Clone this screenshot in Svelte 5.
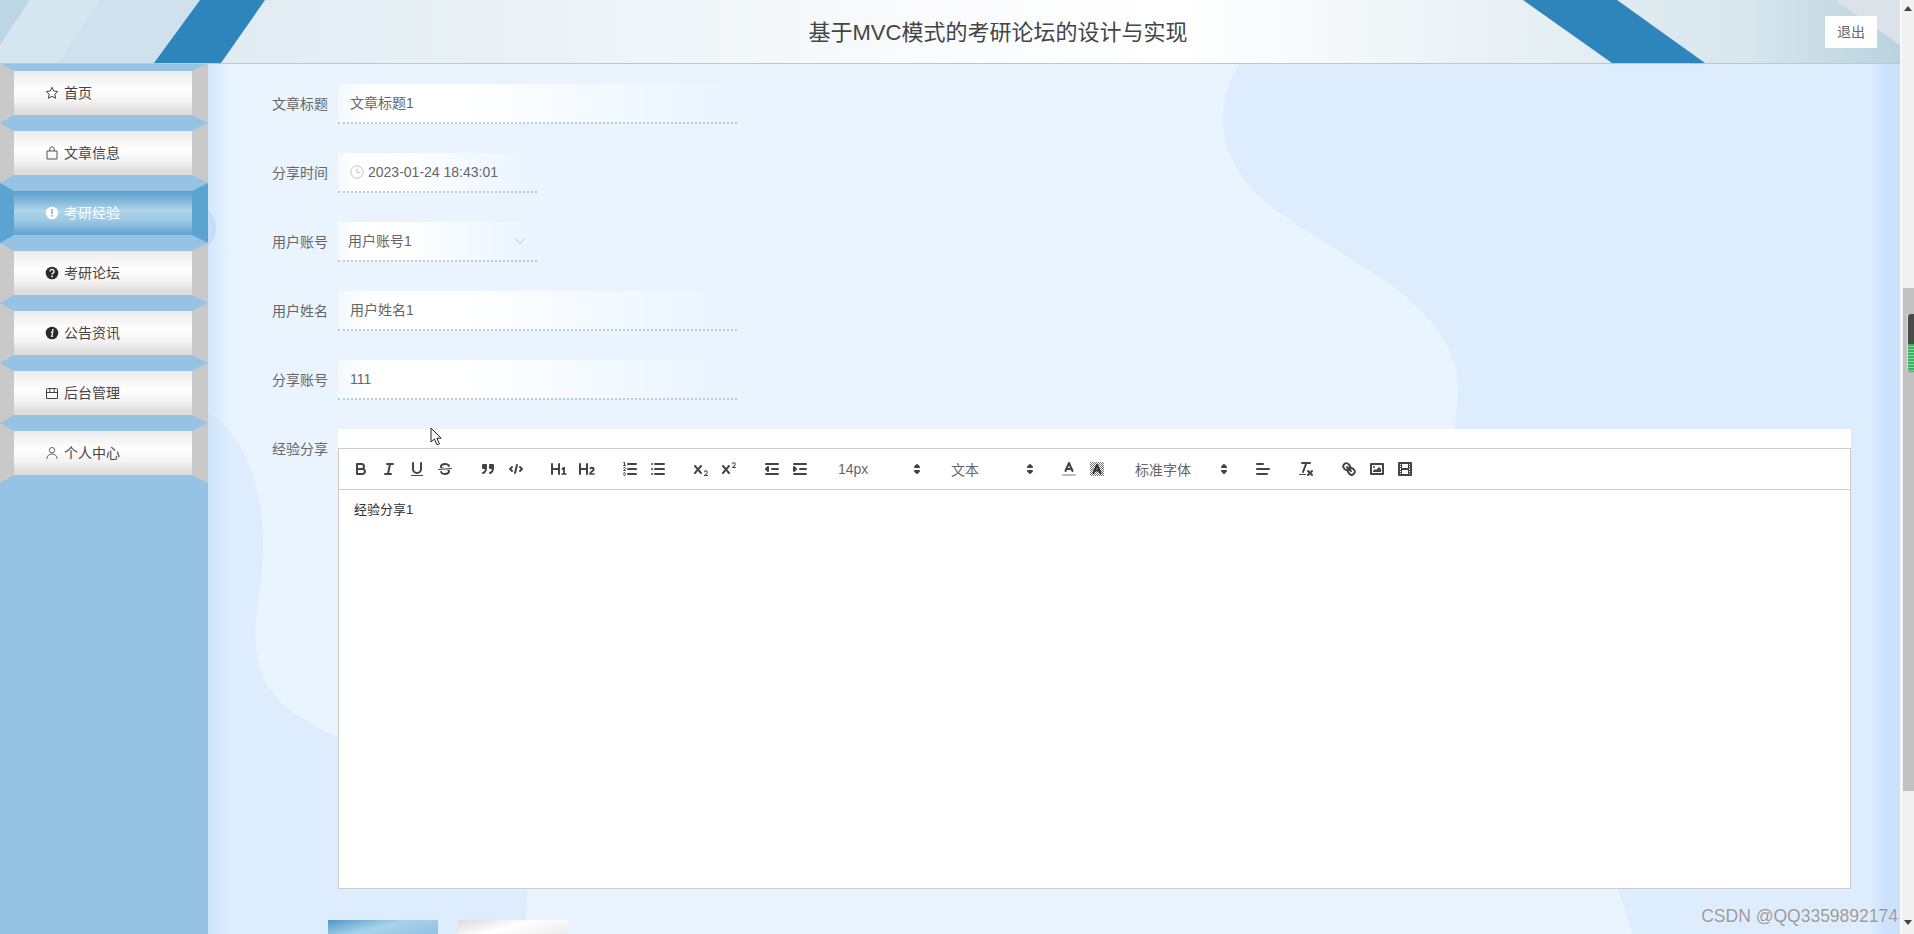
<script>
	const fill = 'fill="#444" stroke="none"';
	const arrows = '<polygon stroke-width="2" fill="#444" points="7 11 9 13 11 11 7 11"/><polygon stroke-width="2" fill="#444" points="7 7 9 5 11 7 7 7"/>';

	const icons = {
		bold: '<path d="M5,4H9.5A2.5,2.5,0,0,1,12,6.5v0A2.5,2.5,0,0,1,9.5,9H5A0,0,0,0,1,5,9V4A0,0,0,0,1,5,4Z"/><path d="M5,9h5.5A2.5,2.5,0,0,1,13,11.5v0A2.5,2.5,0,0,1,10.5,14H5a0,0,0,0,1,0,0V9A0,0,0,0,1,5,9Z"/>',
		italic: '<line x1="7" x2="13" y1="4" y2="4"/><line x1="5" x2="11" y1="14" y2="14"/><line x1="8" x2="10" y1="14" y2="4"/>',
		underline: `<path d="M5,3V9a4.012,4.012,0,0,0,4,4H9a4.012,4.012,0,0,0,4-4V3"/><rect ${fill} height="1" rx="0.5" ry="0.5" width="12" x="3" y="15"/>`,
		strike: `<line stroke-width="1" x1="15.5" x2="2.5" y1="8.5" y2="9.5"/><path ${fill} d="M9.007,8C6.542,7.791,6,7.519,6,6.5,6,5.792,7.283,5,9,5c1.571,0,2.765.679,2.969,1.309a1,1,0,0,0,1.9-.617C13.356,4.106,11.354,3,9,3,6.2,3,4,4.538,4,6.5a3.2,3.2,0,0,0,.5,1.843Z"/><path ${fill} d="M8.984,10C11.457,10.208,12,10.479,12,11.5c0,.708-1.283,1.5-3,1.5-1.571,0-2.765-.679-2.969-1.309a1,1,0,1,0-1.9.617C4.644,13.894,6.646,15,9,15c2.8,0,5-1.538,5-3.5a3.2,3.2,0,0,0-.5-1.843Z"/>`,
		quote: '<rect fill="#444" height="3" width="3" x="4" y="5"/><rect fill="#444" height="3" width="3" x="11" y="5"/><path d="M7,8c0,4.031-3,5-3,5"/><path d="M14,8c0,4.031-3,5-3,5"/>',
		code: '<polyline points="5 7 3 9 5 11"/><polyline points="13 7 15 9 13 11"/><line x1="10" x2="8" y1="5" y2="13"/>',
		h1: `<path ${fill} d="M10,4V14a1,1,0,0,1-2,0V10H3v4a1,1,0,0,1-2,0V4A1,1,0,0,1,3,4V8H8V4a1,1,0,0,1,2,0Zm6.06787,9.209H14.98975V7.59863a.54085.54085,0,0,0-.605-.60547h-.62744a1.01119,1.01119,0,0,0-.748.29688L11.645,8.56641a.5435.5435,0,0,0-.022.8584l.28613.30762a.53861.53861,0,0,0,.84717.0332l.09912-.08789a1.2137,1.2137,0,0,0,.2417-.35254h.02246s-.01123.30859-.01123.60547V13.209H12.041a.54085.54085,0,0,0-.605.60547v.43945a.54085.54085,0,0,0,.605.60547h4.02686a.54085.54085,0,0,0,.605-.60547v-.43945A.54085.54085,0,0,0,16.06787,13.209Z"/>`,
		h2: `<path ${fill} d="M16.73975,13.81445v.43945a.54085.54085,0,0,1-.605.60547H11.855a.58392.58392,0,0,1-.64893-.60547V14.0127c0-2.90527,3.39941-3.42187,3.39941-4.55469a.77675.77675,0,0,0-.84717-.78125,1.17684,1.17684,0,0,0-.83594.38477c-.2749.26367-.561.374-.85791.13184l-.4292-.34082c-.30811-.24219-.38525-.51758-.1543-.81445a2.97155,2.97155,0,0,1,2.45361-1.17676,2.45393,2.45393,0,0,1,2.68408,2.40918c0,2.45312-3.1792,2.92676-3.27832,3.93848h2.79443A.54085.54085,0,0,1,16.73975,13.81445ZM9,3A.99974.99974,0,0,0,8,4V8H3V4A1,1,0,0,0,1,4V14a1,1,0,0,0,2,0V10H8v4a1,1,0,0,0,2,0V4A.99974.99974,0,0,0,9,3Z"/>`,
		ol: `<line x1="7" x2="15" y1="4" y2="4"/><line x1="7" x2="15" y1="9" y2="9"/><line x1="7" x2="15" y1="14" y2="14"/><line stroke-width="1" x1="2.5" x2="4.5" y1="5.5" y2="5.5"/><path ${fill} d="M3.5,6A0.5,0.5,0,0,1,3,5.5V3.085l-0.276.138A0.5,0.5,0,0,1,2.053,3c-0.124-.247-0.023-0.324.224-0.447l1-.5A0.5,0.5,0,0,1,4,2.5v3A0.5,0.5,0,0,1,3.5,6Z"/><path stroke-width="1" d="M4.5,10.5h-2c0-.234,1.85-1.076,1.85-2.234A0.959,0.959,0,0,0,2.5,8.156"/><path stroke-width="1" d="M2.5,14.846a0.959,0.959,0,0,0,1.85-.109A0.7,0.7,0,0,0,3.75,14a0.688,0.688,0,0,0,.6-0.736,0.959,0.959,0,0,0-1.85-.109"/>`,
		ul: '<line x1="6" x2="15" y1="4" y2="4"/><line x1="6" x2="15" y1="9" y2="9"/><line x1="6" x2="15" y1="14" y2="14"/><line x1="3" x2="3" y1="4" y2="4"/><line x1="3" x2="3" y1="9" y2="9"/><line x1="3" x2="3" y1="14" y2="14"/>',
		sub: `<path ${fill} d="M15.5,15H13.861a3.858,3.858,0,0,0,1.914-2.975,1.8,1.8,0,0,0-1.6-1.751A1.921,1.921,0,0,0,12.021,11.7a0.50013,0.50013,0,1,0,.957.291h0a0.914,0.914,0,0,1,1.053-.725,0.81,0.81,0,0,1,.744.762c0,1.076-1.16971,1.86982-1.93971,2.43082A1.45639,1.45639,0,0,0,12,15.5a0.5,0.5,0,0,0,.5.5h3A0.5,0.5,0,0,0,15.5,15Z"/><path ${fill} d="M9.65,5.241a1,1,0,0,0-1.409.108L6,7.964,3.759,5.349A1,1,0,0,0,2.192,6.59178Q2.21541,6.6213,2.241,6.649L4.684,9.5,2.241,12.35A1,1,0,0,0,3.71,13.70722q0.02557-.02768.049-0.05722L6,11.036,8.241,13.65a1,1,0,1,0,1.567-1.24277Q9.78459,12.3777,9.759,12.35L7.316,9.5,9.759,6.651A1,1,0,0,0,9.65,5.241Z"/>`,
		sup: `<path ${fill} d="M15.5,7H13.861a4.015,4.015,0,0,0,1.914-2.975,1.8,1.8,0,0,0-1.6-1.751A1.922,1.922,0,0,0,12.021,3.7a0.5,0.5,0,1,0,.957.291,0.917,0.917,0,0,1,1.053-.725,0.81,0.81,0,0,1,.744.762c0,1.077-1.164,1.925-1.934,2.486A1.423,1.423,0,0,0,12,7.5a0.5,0.5,0,0,0,.5.5h3A0.5,0.5,0,0,0,15.5,7Z"/><path ${fill} d="M9.651,5.241a1,1,0,0,0-1.41.108L6,7.964,3.759,5.349a1,1,0,1,0-1.519,1.3L4.683,9.5,2.241,12.35a1,1,0,1,0,1.519,1.3L6,11.036,8.241,13.65a1,1,0,0,0,1.519-1.3L7.317,9.5,9.759,6.651A1,1,0,0,0,9.651,5.241Z"/>`,
		outdent: '<line x1="3" x2="15" y1="14" y2="14"/><line x1="3" x2="15" y1="4" y2="4"/><line x1="9" x2="15" y1="9" y2="9"/><polyline points="5 7 5 11 3 9 5 7"/>',
		indent: '<line x1="3" x2="15" y1="14" y2="14"/><line x1="3" x2="15" y1="4" y2="4"/><line x1="9" x2="15" y1="9" y2="9"/><polyline fill="#444" points="3 7 3 11 5 9 3 7"/>',
		color: '<line stroke="#bbb" x1="3" x2="15" y1="15" y2="15"/><polyline points="5.5 11 9 3 12.5 11"/><line x1="11.63" x2="6.38" y1="9" y2="9"/>',
		background: '<defs><pattern id="hatch" width="2" height="2" patternUnits="userSpaceOnUse"><rect width="1" height="1" fill="#777" stroke="none"/><rect x="1" y="1" width="1" height="1" fill="#777" stroke="none"/></pattern></defs><rect x="2" y="2" width="14" height="14" fill="url(#hatch)" stroke="none"/><polyline stroke="#333" points="5.5 13 9 5 12.5 13"/><line stroke="#333" x1="11.2" x2="6.8" y1="10.500" y2="10.500"/>',
		align: '<line x1="3" x2="15" y1="9" y2="9"/><line x1="3" x2="13" y1="14" y2="14"/><line x1="3" x2="9" y1="4" y2="4"/>',
		clean: `<line x1="5" x2="13" y1="3" y2="3"/><line x1="6" x2="9.35" y1="12" y2="3"/><line x1="11" x2="15" y1="11" y2="15"/><line x1="15" x2="11" y1="11" y2="15"/><rect ${fill} height="1" rx="0.5" ry="0.5" width="7" x="2" y="14"/>`,
		link: '<line x1="7" x2="11" y1="7" y2="11"/><path d="M8.9,4.577a3.476,3.476,0,0,1,.36,4.679A3.476,3.476,0,0,1,4.577,8.9C3.185,7.5,2.035,6.4,4.217,4.217S7.5,3.185,8.9,4.577Z"/><path d="M13.423,9.1a3.476,3.476,0,0,0-4.679-.36,3.476,3.476,0,0,0,.36,4.679c1.392,1.392,2.5,2.542,4.679.36S14.815,10.5,13.423,9.1Z"/>',
		image: `<rect height="10" width="12" x="3" y="4"/><circle ${fill} cx="6" cy="7" r="1"/><polyline ${fill} points="5 12 5 11 7 9 8 10 11 7 13 9 13 12 5 12"/>`,
		video: `<rect height="12" width="12" x="3" y="3"/><rect ${fill} height="12" width="1" x="5" y="3"/><rect ${fill} height="12" width="1" x="12" y="3"/><rect ${fill} height="2" width="8" x="5" y="8"/><rect ${fill} height="1" width="3" x="3" y="5"/><rect ${fill} height="1" width="3" x="3" y="7"/><rect ${fill} height="1" width="3" x="3" y="10"/><rect ${fill} height="1" width="3" x="3" y="12"/><rect ${fill} height="1" width="3" x="12" y="5"/><rect ${fill} height="1" width="3" x="12" y="7"/><rect ${fill} height="1" width="3" x="12" y="10"/><rect ${fill} height="1" width="3" x="12" y="12"/>`
	};

	// quill toolbar groups, a string is a button and an object is a picker
	const toolbar = [
		['bold', 'italic', 'underline', 'strike'],
		['quote', 'code'],
		['h1', 'h2'],
		['ol', 'ul'],
		['sub', 'sup'],
		['outdent', 'indent'],
		[{ label: '14px', width: 98 }],
		[{ label: '文本', width: 98 }],
		['color', 'background'],
		[{ label: '标准字体', width: 108 }],
		['align'],
		['clean'],
		['link', 'image', 'video']
	];

	const menu = [
		{ name: '首页', icon: 'star' },
		{ name: '文章信息', icon: 'bag' },
		{ name: '考研经验', icon: 'warn', active: true },
		{ name: '考研论坛', icon: 'question' },
		{ name: '公告资讯', icon: 'info' },
		{ name: '后台管理', icon: 'box' },
		{ name: '个人中心', icon: 'user' }
	];

	const fields = [
		{ label: '文章标题', value: '文章标题1' },
		{ label: '分享时间', value: '2023-01-24 18:43:01', type: 'date' },
		{ label: '用户账号', value: '用户账号1', type: 'select' },
		{ label: '用户姓名', value: '用户姓名1' },
		{ label: '分享账号', value: '111' }
	];
</script>

<div class="page">
	<div class="app">
		<header>
			<svg class="decor" viewBox="0 0 1900 63" preserveAspectRatio="none" aria-hidden="true">
				<defs>
					<linearGradient id="hg" x1="0" x2="1" y1="0" y2="0">
						<stop offset="0" stop-color="#d3e4ee" />
						<stop offset="0.12" stop-color="#e0ebf2" />
						<stop offset="0.5" stop-color="#fafcfd" />
						<stop offset="0.62" stop-color="#ffffff" />
						<stop offset="0.79" stop-color="#e9f1f5" />
						<stop offset="0.92" stop-color="#d8e6ee" />
						<stop offset="1" stop-color="#b9d3e0" />
					</linearGradient>
				</defs>
				<rect width="1900" height="63" fill="url(#hg)" />
				<polygon points="0,0 30,0 0,45" fill="#bcd6e5" />
				<polygon points="30,0 100,0 58,63 0,63 0,45" fill="#d6e6f0" />
				<polygon points="100,0 200,0 154,63 58,63" fill="#cfe1ec" />
				<polygon points="200,0 265,0 221,63 154,63" fill="#2d85bb" />
				<polygon points="1523,0 1617,0 1705,63 1612,63" fill="#2d85bb" />
				<polygon points="1835,0 1900,0 1900,45" fill="#dce2ea" />
			</svg>
			<h1>基于MVC模式的考研论坛的设计与实现</h1>
			<button class="logout">退出</button>
		</header>

		<div class="body">
			<aside>
				<ul>
					{#each menu as item}
						<li class:active={item.active}>
							<a href="#/">
								<svg class="mi" viewBox="0 0 14 14" aria-hidden="true">
									{#if item.icon === 'star'}
										<polygon points="7,1.3 8.7,5 12.7,5.5 9.8,8.2 10.6,12.3 7,10.3 3.4,12.3 4.2,8.2 1.3,5.5 5.3,5" fill="none" stroke="#444" />
									{:else if item.icon === 'bag'}
										<path d="M2 5h10v8H2zM4.8 5V3a2.2 2.2 0 0 1 4.4 0v2" fill="none" stroke="#555" />
									{:else if item.icon === 'warn'}
										<circle cx="7" cy="7" r="6.3" fill="#fff" />
										<rect x="6.2" y="3" width="1.6" height="5" fill="#7db6da" />
										<rect x="6.2" y="9" width="1.6" height="1.7" fill="#7db6da" />
									{:else if item.icon === 'question'}
										<circle cx="7" cy="7" r="6.3" fill="#2b2b2b" />
										<path d="M5 5.4a2 2 0 1 1 3 1.7c-.7.4-1 .8-1 1.5" fill="none" stroke="#fff" stroke-width="1.4" />
										<rect x="6.2" y="9.6" width="1.6" height="1.6" fill="#fff" />
									{:else if item.icon === 'info'}
										<circle cx="7" cy="7" r="6.3" fill="#2b2b2b" />
										<path d="M6 6h1.7l-.9 4.4h1" fill="none" stroke="#fff" stroke-width="1.3" />
										<circle cx="7.9" cy="3.9" r="0.95" fill="#fff" />
									{:else if item.icon === 'box'}
										<path d="M1.5 3.500a1 1 0 0 1 1-1h9a1 1 0 0 1 1 1v9h-11zM1.5 6.500h11M4.800 2.500v4M9.200 2.500v4" fill="none" stroke="#444" />
									{:else}
										<circle cx="7" cy="4.2" r="2.7" fill="none" stroke="#666" />
										<path d="M1.800 13c0-3 2.200-5 5.200-5s5.200 2 5.200 5" fill="none" stroke="#666" />
									{/if}
								</svg>
								<span>{item.name}</span>
							</a>
						</li>
					{/each}
				</ul>
			</aside>

			<main>
				<svg class="decor" viewBox="208 63 1692 871" aria-hidden="true">
					<defs>
						<linearGradient id="lb" x1="0" x2="1" y1="0" y2="0">
							<stop offset="0" stop-color="#c4defa" stop-opacity="0.6" />
							<stop offset="1" stop-color="#c4defa" stop-opacity="0" />
						</linearGradient>
						<linearGradient id="rb" x1="0" x2="1" y1="0" y2="0">
							<stop offset="0" stop-color="#cbe2fd" stop-opacity="0" />
							<stop offset="0.5" stop-color="#cbe2fd" />
							<stop offset="1" stop-color="#cbe2fd" />
						</linearGradient>
					</defs>
					<path d="M1240 63C1222 90 1215 130 1235 165C1255 205 1300 225 1360 265C1420 300 1462 345 1458 395C1455 420 1455 430 1452 440L1600 860C1615 880 1625 905 1632 934L1900 934L1900 63Z" fill="#deedfd" />
					<path d="M208 412C240 430 262 480 263 540C264 590 250 620 258 660C266 700 300 720 340 738L528 880L525 934L208 934Z" fill="#deedfd" />
					<circle cx="192" cy="228" r="24" fill="#cbdcf6" />
					<rect x="208" y="63" width="24" height="871" fill="url(#lb)" />
					<rect x="1870" y="63" width="30" height="871" fill="url(#rb)" />
				</svg>

				<form>
					{#each fields as field}
						<div class="row">
							<label for={field.label}>{field.label}</label>
							<div class="control {field.type ?? ''}" id={field.label}>
								{#if field.type === 'date'}
									<svg class="clock" viewBox="0 0 14 14" aria-hidden="true">
										<circle cx="7" cy="7" r="6.200" />
										<path d="M7 3.500V7.400H10.500" />
									</svg>
								{/if}
								<span>{field.value}</span>
								{#if field.type === 'select'}
									<svg class="chevron" viewBox="0 0 12 8" aria-hidden="true">
										<path d="M1 1.500L6 6.500L11 1.500" />
									</svg>
								{/if}
							</div>
						</div>
					{/each}

					<div class="row editor-row">
						<label for="editor">经验分享</label>
						<div class="editor-wrap" id="editor">
							<div class="toolbar">
								{#each toolbar as group}
									<span class="group">
										{#each group as tool}
											{#if typeof tool === 'string'}
												<span class="tool"><svg viewBox="0 0 18 18">{@html icons[tool]}</svg></span>
											{:else}
												<span class="picker" style="width: {tool.width}px">
													<span>{tool.label}</span>
													<svg viewBox="0 0 18 18">{@html arrows}</svg>
												</span>
											{/if}
										{/each}
									</span>
								{/each}
							</div>
							<div class="content">经验分享1</div>
						</div>
					</div>

					<div class="actions">
						<button type="button" class="btn primary"></button>
						<button type="button" class="btn plain"></button>
					</div>
				</form>
			</main>
		</div>
	</div>

	<div class="scrollbar">
		<span class="up"></span>
		<div class="thumb">
			<div class="float-widget"><i></i></div>
		</div>
		<span class="down"></span>
	</div>

	<div class="watermark">CSDN @QQ3359892174</div>
	<svg class="cursor" viewBox="0 0 13 19" aria-hidden="true">
		<path d="M1 1V15L4.400 12L7 17.800L9.400 16.800L6.900 11.200H11.200Z" fill="#fff" stroke="#222" />
	</svg>
</div>

<style>
	:global(body) {
		font-family: 'Liberation Sans', 'Noto Sans CJK SC', sans-serif;
		font-size: 14px;
		color: #666;
	}

	.page {
		position: relative;
		display: flex;
		height: 934px;
		overflow: hidden;
	}

	.app {
		flex: 1;
		display: flex;
		flex-direction: column;
		min-width: 0;
	}

	.decor {
		position: absolute;
		left: 0;
		top: 0;
		width: 100%;
		height: 100%;
	}

	header {
		position: relative;
		z-index: 2;
		height: 63px;
		flex: none;
		display: flex;
		align-items: center;
		justify-content: center;
		padding: 0 0 4px 96px;
		box-sizing: border-box;
		box-shadow: 0 1px 0 #a9cee9;
	}

	h1 {
		position: relative;
		margin: 0;
		font-size: 22px;
		font-weight: 400;
		color: #444;
	}

	.logout {
		position: absolute;
		right: 23px;
		top: 16px;
		width: 52px;
		height: 32px;
		border: 0;
		padding: 0 0 2px;
		background: #fff;
		color: #666;
		font: inherit;
	}

	.body {
		flex: 1;
		display: flex;
		min-height: 0;
	}

	aside {
		width: 208px;
		flex: none;
		background: #96c3e3;
		position: relative;
		z-index: 1;
	}

	aside ul {
		list-style: none;
		margin: 0;
		padding: 0;
	}

	/* mitred borders give the bevelled look */
	li {
		border-style: solid;
		border-width: 8px 16px 8px 14px;
		border-color: #96c3e3 #c9c9c9;
	}

	li a {
		height: 44px;
		box-sizing: border-box;
		display: flex;
		align-items: center;
		gap: 5px;
		padding: 0 0 2px 31px;
		color: #444;
		text-decoration: none;
		background: linear-gradient(180deg, #ecebeb 0%, #f6f5f5 22%, #fff 42%, #f4f3f3 68%, #dedede 92%, #e0e0e0 100%);
	}

	li.active {
		border-left-color: #5ba3d0;
		border-right-color: #5ba3d0;
	}

	li.active a {
		color: #fff;
		background: linear-gradient(180deg, #5b9fcb 0%, #86bbdc 25%, #b0d5ea 45%, #9ac7e2 68%, #6aa7d2 95%);
	}

	.mi {
		width: 14px;
		height: 14px;
		flex: none;
		margin-top: 2px;
	}

	main {
		position: relative;
		flex: 1;
		min-width: 0;
		background: #e9f4ff;
		overflow: hidden;
	}

	form {
		position: relative;
		padding: 21px 49px 0 64px;
	}

	.row {
		display: flex;
		gap: 10px;
		margin-bottom: 29px;
	}

	label {
		width: 56px;
		flex: none;
		line-height: 40px;
		white-space: nowrap;
	}

	.control {
		width: 399px;
		height: 40px;
		box-sizing: border-box;
		display: flex;
		align-items: center;
		padding: 0 12px;
		line-height: 20px;
		background: linear-gradient(90deg, rgba(255, 255, 255, 0.5) 0, #fff 8%, #fff 30%, rgba(255, 255, 255, 0) 100%);
		border-bottom: 2px dotted #b7cbda;
	}

	.control.date,
	.control.select {
		width: 199px;
	}

	.control.select {
		padding-left: 10px;
		justify-content: space-between;
	}

	.clock {
		width: 14px;
		height: 14px;
		margin-right: 4px;
		fill: none;
		stroke: #c0c4cc;
	}

	.chevron {
		width: 12px;
		height: 8px;
		margin-right: -1px;
		fill: none;
		stroke: #c0c4cc;
	}

	.editor-row {
		margin-bottom: 31px;
	}

	.editor-wrap {
		flex: 1;
		min-width: 0;
		height: 460px;
		box-sizing: border-box;
		padding-top: 19px;
		background: #fff;
		display: flex;
		flex-direction: column;
	}

	.toolbar {
		height: 42px;
		box-sizing: border-box;
		border: 1px solid #ccc;
		padding: 8px;
		display: flex;
		align-items: center;
	}

	.group {
		display: flex;
		margin-right: 15px;
	}

	.tool {
		width: 28px;
		height: 24px;
		box-sizing: border-box;
		padding: 3px 5px;
	}

	.tool svg {
		display: block;
		width: 18px;
		height: 18px;
		fill: none;
		stroke: #444;
		stroke-width: 2;
		stroke-linecap: round;
		stroke-linejoin: round;
	}

	.picker {
		height: 24px;
		box-sizing: border-box;
		padding: 0 0 1px 9px;
		display: flex;
		align-items: center;
		justify-content: space-between;
		font-size: 14px;
		color: #666;
	}

	.picker svg {
		width: 18px;
		height: 18px;
		margin: 1px 1px 0 0;
		stroke: #444;
		stroke-linejoin: round;
	}

	.content {
		flex: 1;
		border: 1px solid #ccc;
		border-top: 0;
		padding: 10px 15px;
		font-size: 13px;
		line-height: 19.5px;
		color: #333;
	}

	.actions {
		display: flex;
		gap: 20px;
		padding-left: 56px;
	}

	.btn {
		width: 110px;
		height: 40px;
		border: 0;
		padding: 0;
	}

	.btn.primary {
		background: linear-gradient(165deg, #4f97c8 0%, #a9d3ea 30%, #8ec0e0 65%, #5fa3cf 100%);
	}

	.btn.plain {
		background: linear-gradient(165deg, #dcdada 0%, #fff 30%, #eceaea 65%, #d8d8d8 100%);
	}

	.scrollbar {
		width: 14px;
		flex: none;
		display: flex;
		flex-direction: column;
		background: #f1f1f1;
		box-sizing: border-box;
		border-left: 2px solid #f8f8f8;
		position: relative;
		z-index: 3;
	}

	.up,
	.down {
		display: block;
		flex: none;
		width: 0;
		height: 0;
		margin-left: 2px;
		border-left: 4px solid transparent;
		border-right: 4px solid transparent;
	}

	.up {
		margin-top: 6px;
		margin-bottom: 277px;
		border-bottom: 5px solid #444;
	}

	.down {
		margin-top: 129px;
		border-top: 5px solid #444;
	}

	.thumb {
		flex: none;
		height: 503px;
		margin-left: 1px;
		background: #c1c1c1;
		position: relative;
	}

	.float-widget {
		position: absolute;
		right: 0;
		top: 26px;
		width: 6px;
		height: 58px;
		background: #4a4a4a;
		border-radius: 3px 0 0 3px;
		box-shadow: -1px 0 0 #ddd;
		overflow: hidden;
	}

	.float-widget i {
		position: absolute;
		left: 0;
		right: 0;
		bottom: 0;
		height: 28px;
		background: repeating-linear-gradient(180deg, #36b35c 0 2px, #8fd8a4 2px 3px);
	}

	.watermark {
		position: absolute;
		z-index: 4;
		right: 16px;
		top: 906px;
		font-size: 17.5px;
		line-height: 20px;
		color: #999;
		text-shadow: 0 0 1px #fff;
		white-space: nowrap;
	}

	.cursor {
		position: absolute;
		z-index: 4;
		left: 430px;
		top: 427px;
		width: 13px;
		height: 19px;
	}
</style>
